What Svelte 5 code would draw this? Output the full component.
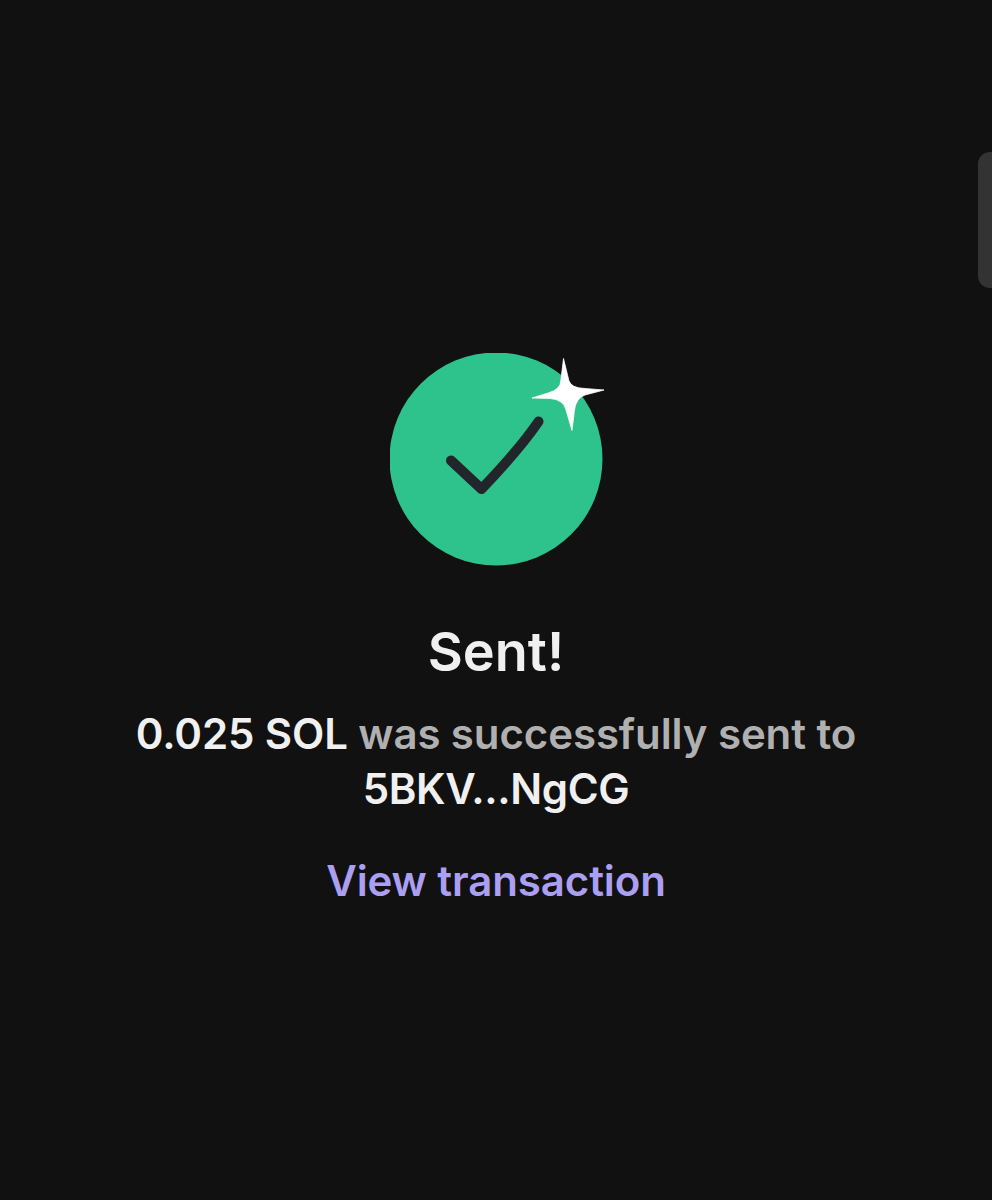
<script>
  let amount = "0.025 SOL"
  let address = "5BKV...NgCG"
</script>

<div class="page">
  <div class="handle"></div>
  <svg class="badge" width="216" height="213" viewBox="390 353 216 213" aria-hidden="true">
    <circle cx="496" cy="459" r="106.500" fill="#2ec28c" />
    <path d="M451 460.500 481.500 489C503 466.500 522 446 538.500 421.500" fill="none" stroke="#22252a" stroke-width="10" stroke-linecap="round" stroke-linejoin="round" />
    <path d="M563.500 358.500 569 381Q571 388 585 388.500L604 390 585 395Q576 398 574.500 410L572 430.500 566 410Q563.500 399.500 550 398.500L532 398 548 393Q560.500 389.500 560.800 381Z" fill="#fff" stroke="#fff" stroke-width="0.8" stroke-linejoin="round" />
  </svg>
  <h1>Sent!</h1>
  <p class="message"><strong>{amount}</strong> was successfully sent to <strong class="address">{address}</strong></p>
  <a class="link" href="#tx">View transaction</a>
</div>

<style>
  :global(body) {
    background: #111111;
  }

  .page {
    position: relative;
    height: 1200px;
    box-sizing: border-box;
    padding-top: 353px;
    display: flex;
    flex-direction: column;
    align-items: center;
    background: #111111;
    font-family: Inter, "Liberation Sans", sans-serif;
    overflow: hidden;
  }

  .handle {
    position: absolute;
    top: 152px;
    right: -14px;
    width: 28px;
    height: 136px;
    border-radius: 12px;
    background: #333333;
  }

  .badge {
    display: block;
    margin-left: 3px;
  }

  h1 {
    margin: 52px 0 0;
    font-size: 54px;
    line-height: 68px;
    font-weight: 600;
    color: #f0f0f0;
  }

  .message {
    width: 760px;
    margin: 20px 0 0;
    text-align: center;
    font-size: 42px;
    letter-spacing: -0.1px;
    line-height: 55px;
    font-weight: 600;
    color: #b0b0b0;
  }

  strong {
    font-weight: 600;
    color: #f0f0f0;
  }

  .address {
    letter-spacing: -0.4px;
  }

  .link {
    margin-top: 37px;
    font-size: 42px;
    letter-spacing: -0.1px;
    line-height: 55px;
    font-weight: 600;
    color: #ab9ff2;
    text-decoration: none;
  }
</style>
